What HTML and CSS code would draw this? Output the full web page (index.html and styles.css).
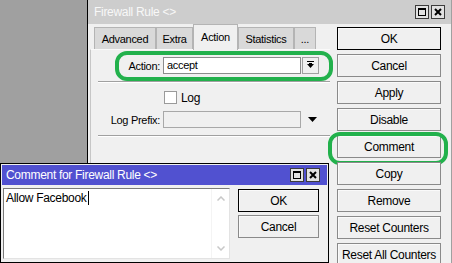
FILE: index.html
```html
<!DOCTYPE html>
<html>

<head>
  <meta charset="utf-8">
  <title>Firewall Rule</title>
  <link rel="stylesheet" href="styles.css">
</head>

<body>
  <div class="win main-win">
    <div class="titlebar">
      <span class="title">Firewall Rule &lt;&gt;</span>
      <div class="title-buttons">
        <span class="tbtn"><svg width="12" height="12" viewBox="0 0 12 12"><rect x="2.5" y="2.5" width="7" height="7" fill="none" stroke="#000"/><rect x="2" y="2" width="8" height="2" fill="#000"/></svg></span>
        <span class="tbtn"><svg width="12" height="12" viewBox="0 0 12 12"><path d="M3 3 L9 9 M9 3 L3 9" stroke="#000" stroke-width="2"/></svg></span>
      </div>
    </div>
    <div class="main-body">
      <div class="editor">
        <div class="tabs">
          <div class="tab tab-advanced">Advanced</div>
          <div class="tab tab-extra">Extra</div>
          <div class="tab tab-action active">Action</div>
          <div class="tab tab-stats">Statistics</div>
          <div class="tab tab-more">...</div>
        </div>
        <div class="pane">
          <div class="field">
            <span class="field-label">Action:</span>
            <div class="input">accept</div>
            <span class="drop-btn"><svg width="15" height="15" viewBox="0 0 15 15"><rect x="4" y="3" width="7" height="1" fill="#000"/><path d="M4 6 H11 L7.5 10 Z" fill="#000"/><rect x="6" y="5" width="3" height="2" fill="#000"/></svg></span>
            <span class="mark mark-action"></span>
          </div>
          <div class="sep"></div>
          <div class="field check-field">
            <span class="checkbox"></span>
            <span class="check-label">Log</span>
          </div>
          <div class="field prefix-field">
            <span class="field-label">Log Prefix:</span>
            <div class="input input-disabled"></div>
            <svg class="arrow" width="9" height="5" viewBox="0 0 9 5"><path d="M0 0 H9 L4.5 5 Z" fill="#000"/></svg>
          </div>
          <div class="sep"></div>
        </div>
      </div>
      <div class="side-buttons">
        <div class="btn btn-default">OK</div>
        <div class="btn">Cancel</div>
        <div class="btn">Apply</div>
        <div class="btn">Disable</div>
        <div class="btn btn-marked">Comment<span class="mark mark-comment"></span></div>
        <div class="btn">Copy</div>
        <div class="btn">Remove</div>
        <div class="btn">Reset Counters</div>
        <div class="btn">Reset All Counters</div>
      </div>
    </div>
  </div>

  <div class="win dialog">
    <div class="titlebar titlebar-active">
      <span class="title">Comment for Firewall Rule &lt;&gt;</span>
      <div class="title-buttons">
        <span class="tbtn"><svg width="12" height="12" viewBox="0 0 12 12"><rect x="2.5" y="2.5" width="7" height="7" fill="none" stroke="#000"/><rect x="2" y="2" width="8" height="2" fill="#000"/></svg></span>
        <span class="tbtn"><svg width="12" height="12" viewBox="0 0 12 12"><path d="M3 3 L9 9 M9 3 L3 9" stroke="#000" stroke-width="2"/></svg></span>
      </div>
    </div>
    <div class="dialog-body">
      <div class="textarea">
        <div class="text">Allow Facebook<span class="caret"></span></div>
        <div class="scroll">
          <svg width="8" height="5" viewBox="0 0 8 5"><path d="M0.5 4.5 L4 1 L7.5 4.5" fill="none" stroke="#c8c8c8" stroke-width="1.5"/></svg>
          <svg width="8" height="5" viewBox="0 0 8 5"><path d="M0.5 0.5 L4 4 L7.5 0.5" fill="none" stroke="#c8c8c8" stroke-width="1.5"/></svg>
        </div>
      </div>
      <div class="dialog-buttons">
        <div class="btn btn-default">OK</div>
        <div class="btn">Cancel</div>
      </div>
    </div>
  </div>
</body>

</html>
```

FILE: styles.css
```css
* {
  margin: 0;
  padding: 0;
}

body {
  position: relative;
  width: 452px;
  height: 263px;
  overflow: hidden;
  background-color: #a0a0a0;
  font-family: "Liberation Sans", Arial, sans-serif;
  font-size: 11px;
  letter-spacing: -0.3px;
  color: #000;
}

.win {
  position: absolute;
  box-sizing: border-box;
  background-color: #f0f0f0;
}

.main-win {
  left: 87px;
  top: 0;
  width: 365px;
  height: 263px;
  border-left: 1px solid #000;
  border-right: 1px solid #a0a0a0;
}

.titlebar {
  display: flex;
  align-items: center;
  justify-content: space-between;
  height: 24px;
  padding: 0 6px;
  background-color: #cdcdcd;
  color: #f8f8f8;
  font-size: 12px;
}

.title-buttons {
  display: flex;
  gap: 2px;
}

.tbtn {
  display: flex;
  width: 14px;
  height: 14px;
  box-sizing: border-box;
  border: 1px solid #3c3c3c;
  background-color: #e2e2e2;
}

.main-body {
  display: flex;
  padding-left: 2px;
}

.editor {
  width: 240px;
}

.tabs {
  display: flex;
  align-items: flex-end;
  height: 25px;
  padding-left: 4px;
}

.tab {
  display: flex;
  align-items: center;
  justify-content: center;
  height: 22px;
  box-sizing: border-box;
  border: 1px solid #b4b4b4;
  border-bottom: none;
  background-color: #d9d9d9;
}

.tab.active {
  position: relative;
  z-index: 1;
  height: 26px;
  margin-bottom: -1px;
  background-color: #f0f0f0;
  padding-bottom: 2px;
}

.tab-advanced { width: 62px; }
.tab-extra { width: 37px; }
.tab-action { width: 45px; }
.tab-stats { width: 56px; }
.tab-more { width: 22px; }

.pane {
  height: 213px;
  border-top: 1px solid #fafafa;
  border-left: 1px solid #c6c6c6;
  padding-top: 7px;
}

.field {
  position: relative;
  display: flex;
  align-items: center;
  height: 17px;
}

.field-label {
  width: 69px;
  margin-right: 3px;
  text-align: right;
}

.input {
  width: 138px;
  height: 17px;
  box-sizing: border-box;
  border: 1px solid #8c8c8c;
  background-color: #fff;
  padding-left: 3px;
  line-height: 15px;
}

.input-disabled {
  background-color: #f0f0f0;
  border-color: #a8a8a8;
}

.drop-btn {
  display: flex;
  align-items: center;
  justify-content: center;
  width: 17px;
  height: 17px;
  margin-left: 1px;
  box-sizing: border-box;
  border: 1px solid #a0a0a0;
  background-color: #f0f0f0;
}

.sep {
  height: 1px;
  margin: 7px 0 0 7px;
  background-color: #a0a0a0;
  border-bottom: 1px solid #fff;
}

.check-field {
  height: 13px;
  margin-top: 8px;
}

.checkbox {
  width: 13px;
  height: 13px;
  margin-left: 73px;
  box-sizing: border-box;
  border: 1px solid #9a9a9a;
  background-color: #fff;
}

.check-label {
  margin-left: 4px;
  font-size: 12px;
}

.prefix-field {
  margin-top: 7px;
}

.arrow {
  margin-left: 7px;
}

.side-buttons {
  display: flex;
  flex-direction: column;
  gap: 4px;
  width: 104px;
  margin-left: 7px;
  padding-top: 3px;
}

.btn {
  position: relative;
  display: flex;
  align-items: center;
  justify-content: center;
  height: 23px;
  flex-shrink: 0;
  box-sizing: border-box;
  border: 1px solid #8a8a8a;
  background-color: #f0f0f0;
  box-shadow: inset 1px 1px #fafafa;
  font-size: 12px;
}

.btn-default {
  border-color: #000;
}

.mark {
  position: absolute;
  box-sizing: border-box;
  border: 4px solid #22b14c;
  border-radius: 12px;
}

.mark-action {
  left: 24px;
  top: -6px;
  width: 218px;
  height: 30px;
}

.mark-comment {
  left: -10px;
  top: -4px;
  width: 120px;
  height: 33px;
}

/* comment dialog */
.dialog {
  left: 0;
  top: 163px;
  width: 329px;
  height: 100px;
  border: 1px solid #000;
  padding: 1px;
}

.titlebar-active {
  height: 20px;
  padding: 0 7px 0 4px;
  background-color: #5151d0;
  color: #fff;
}

.dialog-body {
  display: flex;
  padding: 3px 0 0 1px;
}

.textarea {
  display: flex;
  width: 227px;
  height: 71px;
  box-sizing: border-box;
  border: 1px solid;
  border-color: #7a7a7a #e3e3e3 #e3e3e3 #7a7a7a;
  background-color: #fff;
}

.text {
  flex: 1;
  padding: 2px 0 0 2px;
  line-height: 13px;
  font-size: 12px;
}

.caret {
  display: inline-block;
  width: 1px;
  height: 14px;
  margin-left: 1px;
  vertical-align: -3px;
  background-color: #000;
}

.scroll {
  display: flex;
  flex-direction: column;
  justify-content: space-between;
  align-items: center;
  width: 18px;
  padding: 7px 0 7px;
  box-sizing: border-box;
  border-left: 1px solid #f4f4f4;
}

.dialog-buttons {
  display: flex;
  flex-direction: column;
  gap: 3px;
  width: 81px;
  margin-left: 8px;
  padding-top: 1px;
}
```
